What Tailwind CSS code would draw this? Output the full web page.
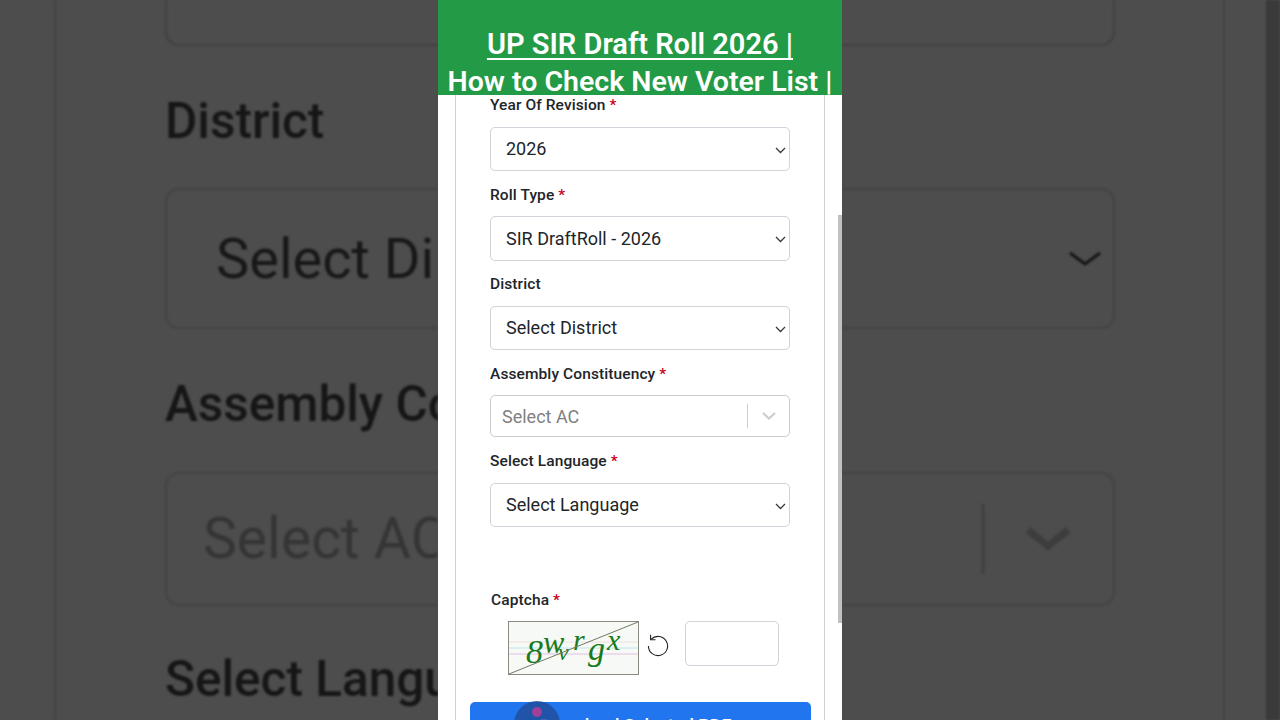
<!DOCTYPE html>
<html lang="en">
<head>
    <meta charset="UTF-8">
    <title>UP SIR Draft Roll 2026</title>
    <script src="https://cdn.jsdelivr.net/npm/@tailwindcss/browser@4"></script>
</head>
<body class="bg-[#4d4d4d] font-['Roboto',sans-serif] overflow-hidden">
<div class="relative w-[1280px] h-[720px] overflow-hidden flex justify-center">

    <!-- blurred, zoomed copy of the form behind the video -->
    <div class="absolute inset-0 blur-[1px] whitespace-nowrap">
        <div class="absolute top-0 right-0 w-[14px] h-full bg-[#3a3a3a]"></div>
        <div class="w-[1171px] h-full ml-[54px] border-x-2 border-[#434343] pl-[109px] pr-[108px]">
            <div class="h-[46px] border-2 border-t-0 border-[#414141] rounded-b-[14px]"></div>
            <div class="mt-[45px] h-[60px] text-[49.5px] leading-[60px] font-medium text-[#161616]">District</div>
            <div class="mt-[37px] h-[141px] border-2 border-[#434343] rounded-[14px] pl-[49px] pr-[12px] flex items-center justify-between text-[56px] text-[#181818]">
                <span class="block w-[221px] overflow-hidden">Select Di</span>
                <svg class="w-[32px] h-[16px]" viewBox="0 0 32 16" fill="none" stroke="#141414" stroke-width="3"><path d="M1 2l15 11L31 2"/></svg>
            </div>
            <div class="mt-[45px] h-[60px] w-[273px] overflow-hidden text-[49.5px] leading-[60px] font-medium text-[#161616]">Assembly Co</div>
            <div class="mt-[38px] h-[134px] border-2 border-[#434343] rounded-[14px] pl-[36px] pr-[43px] flex items-center text-[57px] text-[#353535]">
                <span class="block w-[234px] overflow-hidden">Select AC</span>
                <div class="ml-auto w-[4px] h-[70px] bg-[#434343]"></div>
                <svg class="ml-[41px] w-[44px] h-[24px]" viewBox="0 0 44 24" fill="none" stroke="#3d3d3d" stroke-width="7"><path d="M2 3l20 16L42 3"/></svg>
            </div>
            <div class="mt-[43px] h-[60px] w-[273px] overflow-hidden text-[49.5px] leading-[60px] font-medium text-[#161616]">Select Langu</div>
        </div>
    </div>

    <!-- phone column -->
    <div class="relative z-10 w-[404px] h-[720px] bg-white overflow-hidden flex flex-col">
        <div class="h-[95px] shrink-0 bg-[#239a45] overflow-hidden pt-[25px] text-center text-white text-[28.5px] leading-[38px] font-semibold whitespace-nowrap">
            <div class="text-[29px] underline underline-offset-[4px] decoration-2">UP SIR Draft Roll 2026 |</div>
            <div>How to Check New Voter List |</div>
        </div>

        <div class="relative flex-1">
            <div class="absolute right-0 top-[120px] w-[4px] h-[408px] bg-[#c2c2c2]"></div>

            <div class="w-[370px] h-full ml-[17px] border-x border-[#d0d0d0] px-[34px] text-[#212529]">
                <label class="block text-[15.5px] leading-[20px] font-medium pb-[12px] tracking-[0.1px]">Year Of Revision <span class="text-[#c5001a]">*</span></label>
                <div class="relative">
                    <select class="block w-full h-[44px] appearance-none bg-white border border-[#ced4da] rounded-[5px] pl-[15px] pb-[2px] text-[18px] text-[#212529]">
                        <option>2026</option>
                    </select>
                    <svg class="absolute right-[4px] top-[20px] w-[11px] h-[7px] pointer-events-none" viewBox="0 0 11 7" fill="none" stroke="#343a40" stroke-width="1.3"><path d="M1 1l4.5 4.5L10 1"/></svg>
                </div>

                <label class="block mt-[14px] text-[15.5px] leading-[20px] font-medium pb-[11px] tracking-[0.1px]">Roll Type <span class="text-[#c5001a]">*</span></label>
                <div class="relative">
                    <select class="block w-full h-[45px] appearance-none bg-white border border-[#ced4da] rounded-[5px] pl-[15px] text-[18px] text-[#212529]">
                        <option>SIR DraftRoll - 2026</option>
                    </select>
                    <svg class="absolute right-[4px] top-[20px] w-[11px] h-[7px] pointer-events-none" viewBox="0 0 11 7" fill="none" stroke="#343a40" stroke-width="1.3"><path d="M1 1l4.5 4.5L10 1"/></svg>
                </div>

                <label class="block mt-[13px] text-[15.5px] leading-[20px] font-medium pb-[12px] tracking-[0.1px]">District</label>
                <div class="relative">
                    <select class="block w-full h-[44px] appearance-none bg-white border border-[#ced4da] rounded-[5px] pl-[15px] pb-[2px] text-[18px] text-[#212529]">
                        <option>Select District</option>
                    </select>
                    <svg class="absolute right-[4px] top-[20px] w-[11px] h-[7px] pointer-events-none" viewBox="0 0 11 7" fill="none" stroke="#343a40" stroke-width="1.3"><path d="M1 1l4.5 4.5L10 1"/></svg>
                </div>

                <label class="block mt-[14px] text-[15.5px] leading-[20px] font-medium pb-[11px] tracking-[0.1px]">Assembly Constituency <span class="text-[#c5001a]">*</span></label>
                <div class="flex items-center h-[42px] border border-[#cccccc] rounded-[5px] pl-[11px] pr-[13px] text-[18px] text-[#808080]">
                    <span>Select AC</span>
                    <div class="ml-auto w-px h-[24px] bg-[#cccccc]"></div>
                    <svg class="ml-[14px] w-[14px] h-[8px]" viewBox="0 0 14 8" fill="none" stroke="#cccccc" stroke-width="2.2"><path d="M1 1l6 5.5L13 1"/></svg>
                </div>

                <label class="block mt-[14px] text-[15.5px] leading-[20px] font-medium pb-[12px] tracking-[0.1px]">Select Language <span class="text-[#c5001a]">*</span></label>
                <div class="relative">
                    <select class="block w-full h-[44px] appearance-none bg-white border border-[#ced4da] rounded-[5px] pl-[15px] pb-[2px] text-[18px] text-[#212529]">
                        <option>Select Language</option>
                    </select>
                    <svg class="absolute right-[4px] top-[20px] w-[11px] h-[7px] pointer-events-none" viewBox="0 0 11 7" fill="none" stroke="#343a40" stroke-width="1.3"><path d="M1 1l4.5 4.5L10 1"/></svg>
                </div>

                <label class="block mt-[63px] ml-px text-[15.5px] leading-[20px] font-medium tracking-[0.1px]">Captcha <span class="text-[#c5001a]">*</span></label>
                <div class="flex items-start mt-[11px] ml-[18px]">
                    <svg class="w-[131px] h-[54px] shrink-0" viewBox="0 0 131 54">
                        <rect x="0.5" y="0.5" width="130" height="53" fill="#f6f9f5" stroke="#8a8a80"/>
                        <path d="M1 21h129" stroke="#f3dfe0"/>
                        <path d="M1 27h129" stroke="#bfe6ee"/>
                        <path d="M1 33h129" stroke="#e3bfe3"/>
                        <text fill="#177a1c" font-family="'Liberation Serif',serif" font-style="italic" font-size="32"><tspan x="18" y="42" font-size="34">8</tspan><tspan x="35" y="32">w</tspan><tspan x="50" y="39" font-size="24">v</tspan><tspan x="65" y="29" font-size="30">r</tspan><tspan x="80" y="39" font-size="34">g</tspan><tspan x="99" y="29" font-size="30">x</tspan></text>
                        <path d="M1 53L130 1" stroke="#6f7d66" fill="none"/>
                    </svg>
                    <svg class="w-[24px] h-[24px] mt-[12px] ml-[7px] shrink-0" viewBox="0 0 24 24" fill="none" stroke="#222222" stroke-width="1.1">
                        <path d="M5.2 6.2A9.6 9.6 0 1 1 2.4 13"/>
                        <path d="M4.6 1.8v4.9h4.9"/>
                    </svg>
                    <input class="block w-[94px] h-[45px] ml-[15px] border border-[#ced4da] rounded-[5px] bg-white" type="text">
                </div>
            </div>

            <button class="absolute left-[32px] top-[607px] w-[341px] h-[60px] bg-[#2176f0] rounded-t-[5px] text-white text-[18px] font-medium pt-[10px] pr-[10px] flex justify-center items-start overflow-hidden">Download Selected PDF</button>
            <div class="absolute left-[76px] top-[606px] w-[46px] h-[46px] rounded-full bg-[#1f4f9c]/85">
                <div class="w-[10px] h-[10px] rounded-full bg-[#a0409a] mx-auto mt-[6px]"></div>
            </div>
        </div>
    </div>
</div>
</body>
</html>
